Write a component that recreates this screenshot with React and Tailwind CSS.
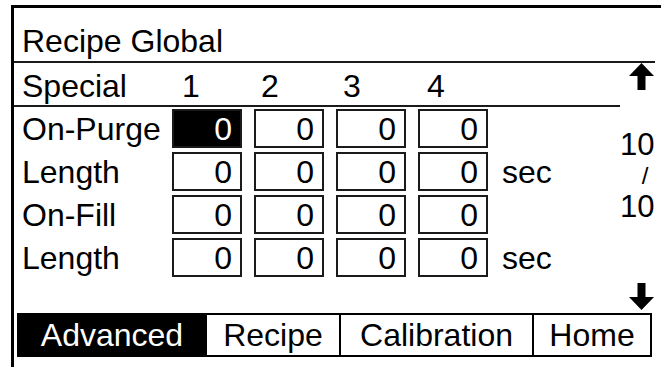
import React from "react";

function UpArrow() {
  return (
    <svg width="25" height="27" viewBox="0 0 25 27">
      <polygon points="12.5,0 25,13 16.5,13 16.5,27 8.5,27 8.5,13 0,13" fill="#000" />
    </svg>
  );
}
function DownArrow() {
  return (
    <svg width="25" height="27" viewBox="0 0 25 27">
      <polygon points="12.5,27 25,14 16.5,14 16.5,0 8.5,0 8.5,14 0,14" fill="#000" />
    </svg>
  );
}

function Box({ active }) {
  return (
    <div
      className={
        "w-[70px] h-[39px] border-2 border-[#1a1a1a] flex items-center justify-end pr-[8px] " +
        (active ? "bg-black text-white" : "bg-white text-black")
      }
    >
      0
    </div>
  );
}

function Row({ label, first, sec }) {
  return (
    <div className="flex items-center h-[39px]">
      <div className="w-[158px] pl-2">{label}</div>
      <div className="flex gap-[12px]">
        <Box active={first} />
        <Box />
        <Box />
        <Box />
      </div>
      {sec && <div className="ml-[14px]">sec</div>}
    </div>
  );
}

export default function App() {
  return (
    <div
      className="w-[665px] h-[367px] bg-white overflow-hidden text-black text-[32px] leading-none"
      style={{ fontFamily: '"Liberation Sans", Arial, sans-serif' }}
    >
      <div className="ml-[11px] mt-[5px] w-[650px] h-[362px] border-l-[3px] border-t-[3px] border-black flex">
        <div className="flex-1 flex flex-col">
          <div className="h-[53px] pt-[17px] pl-2">Recipe Global</div>
          <div className="h-[2px] bg-[#1a1a1a] mr-[6px]" />
          <div className="flex h-[250px]">
            <div className="w-[606px] flex flex-col">
              <div className="h-[42px] flex pt-[7px]">
                <div className="w-[158px] pl-2">Special</div>
                <div className="flex gap-[12px]">
                  <div className="w-[70px] pl-[10px]">1</div>
                  <div className="w-[70px] pl-[7px]">2</div>
                  <div className="w-[70px] pl-[7px]">3</div>
                  <div className="w-[70px] pl-[9px]">4</div>
                </div>
              </div>
              <div className="h-[2px] bg-[#1a1a1a]" />
              <div className="pt-[2px] flex flex-col gap-[4px]">
                <Row label="On-Purge" first />
                <Row label="Length" sec />
                <Row label="On-Fill" />
                <Row label="Length" sec />
              </div>
            </div>
            <div className="flex-1 flex flex-col items-end pr-[7px] pb-[3px]">
              <UpArrow />
              <div className="mt-[39px] text-[31px] leading-[31px] text-right">
                <div>10</div>
                <div className="text-[24px] pr-[6px]">/</div>
                <div>10</div>
              </div>
              <div className="mt-auto">
                <DownArrow />
              </div>
            </div>
          </div>
          <div className="ml-[3px] w-[635px] h-[44px] flex border-2 border-black">
            <div className="w-[186px] bg-black text-white flex items-center justify-center">Advanced</div>
            <div className="w-[134px] border-l-2 border-black flex items-center justify-center">Recipe</div>
            <div className="w-[193px] border-l-2 border-black flex items-center justify-center">Calibration</div>
            <div className="flex-1 border-l-2 border-black flex items-center justify-center">Home</div>
          </div>
        </div>
        <div className="w-[2px] h-[352px] bg-black" />
      </div>
    </div>
  );
}
